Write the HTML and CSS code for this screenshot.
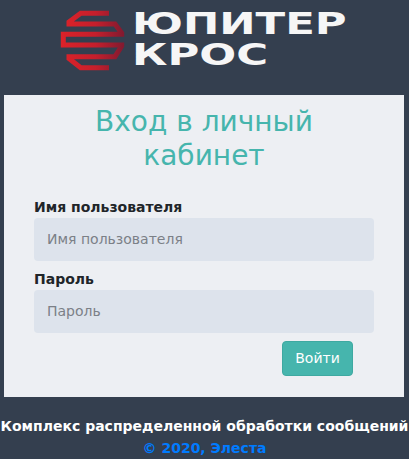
FILE: index.html
```html
<!DOCTYPE html>
<html lang="ru">
<head>
  <meta charset="UTF-8" />
  <title>Вход в личный кабинет</title>
  <link rel="stylesheet" href="styles.css">
</head>
<body>

  <header class="logo">
    <svg class="logo-mark" width="68" height="64" viewBox="0 0 68 64">
      <defs>
        <linearGradient id="markRed" gradientUnits="userSpaceOnUse" x1="2" y1="0" x2="65" y2="0">
          <stop offset="0" stop-color="#dc2229"/>
          <stop offset="0.55" stop-color="#c51f2c"/>
          <stop offset="1" stop-color="#801a30"/>
        </linearGradient>
      </defs>
      <path class="mark-line" d="M50 5.3H21.7L10 14V16H56L62.7 25V26.3H4.3V37H62.7V38L56 48.7H10V50.5L21.7 59.7H50" stroke="url(#markRed)"/>
    </svg>
    <div class="logo-text">
      <span>ЮПИТЕР</span>
      <span>КРОС</span>
    </div>
  </header>

  <main class="login-card">
    <h1 class="login-title">Вход в личный кабинет</h1>
    <form class="login-form">
      <label class="field-label" for="username">Имя пользователя</label>
      <input class="field-input" id="username" type="text" placeholder="Имя пользователя">
      <label class="field-label" for="password">Пароль</label>
      <input class="field-input" id="password" type="password" placeholder="Пароль">
      <div class="form-actions">
        <button class="login-btn" type="button">Войти</button>
      </div>
    </form>
  </main>

  <footer class="page-footer">
    <p class="footer-name">Комплекс распределенной обработки сообщений</p>
    <a class="footer-link" href="#">© 2020, Элеста</a>
  </footer>

</body>
</html>
```

FILE: styles.css
```css
html, body {
  margin: 0;
  padding: 0;
  height: 100%;
  background: #343f4f;
  font-family: "DejaVu Sans", sans-serif;
  overflow: hidden;
}

.logo {
  height: 95px;
  box-sizing: border-box;
  padding: 8px 0 0 59px;
  display: flex;
  align-items: flex-start;
  gap: 5px;
}
.logo-mark {
  display: block;
  flex: none;
}
.mark-line {
  fill: none;
  stroke-width: 5;
  stroke-linejoin: miter;
}
.logo-text {
  display: flex;
  flex-direction: column;
  font-size: 31px;
  font-weight: bold;
  line-height: 31px;
  color: #f6f6f6;
  transform: scaleX(1.4);
  transform-origin: left top;
}

.login-card {
  margin: 0 5px 0 4px;
  height: 302px;
  box-sizing: border-box;
  padding: 10px 30px 0;
  background: #edeff3;
}
.login-title {
  margin: 0 0 24px;
  font-size: 28px;
  font-weight: normal;
  line-height: 34px;
  text-align: center;
  color: #46b5ad;
}

.login-form {
  display: flex;
  flex-direction: column;
}
.field-label {
  margin-bottom: 1px;
  font-size: 14px;
  font-weight: bold;
  line-height: 20px;
  color: #212529;
}
.field-input {
  height: 43px;
  box-sizing: border-box;
  margin-bottom: 8px;
  padding: 0 13px 2px;
  border: 0;
  border-radius: 4px;
  background: #dde3ec;
  font-family: inherit;
  font-size: 14px;
  color: #495057;
}
.field-input::placeholder {
  color: #7b8087;
  opacity: 1;
}

.form-actions {
  display: flex;
  justify-content: flex-end;
  padding: 0 21px 0 0;
}
.login-btn {
  width: 71px;
  height: 35px;
  padding: 0 0 2px;
  border: 1px solid #3ea9a1;
  border-radius: 4px;
  background: #46b5ad;
  font-family: inherit;
  font-size: 14px;
  color: #fff;
}

.page-footer {
  padding-top: 19px;
  text-align: center;
  font-size: 14px;
  font-weight: bold;
  line-height: 21px;
  white-space: nowrap;
}
.footer-name {
  margin: 0 0 1px;
  color: #fff;
}
.footer-link {
  color: #007bff;
  text-decoration: none;
}
```
